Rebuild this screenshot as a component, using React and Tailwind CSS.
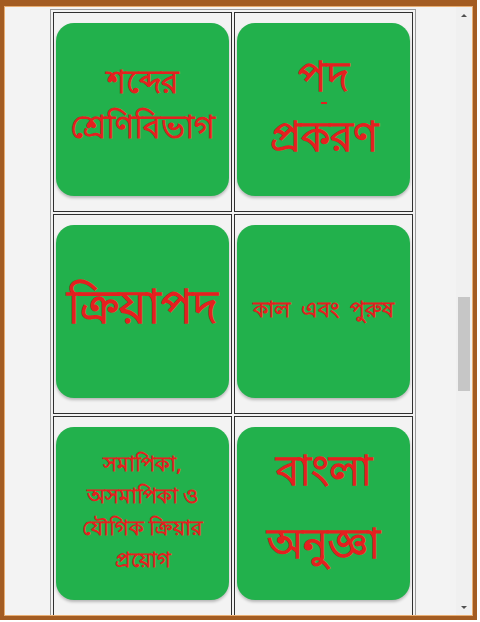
import React from "react";

// কার্ড: সবুজ বোতাম, লাল লেখা
const Card = ({ children, className = "" }) => (
  <div className="pl-[2px] pt-[10px]">
    <div
      className={`w-[173px] h-[173px] rounded-[18px] bg-[#22b14c] shadow-[0_2px_3px_rgba(0,0,0,0.25)] flex flex-col items-center justify-center text-center text-[#e4201f] font-semibold ${className}`}
    >
      {children}
    </div>
  </div>
);

const Cell = ({ children }) => (
  <div className="h-[200px] border border-[#2f2f2f] bg-[#f3f3f3]">{children}</div>
);

export default function App() {
  return (
    <div className="w-[480px] h-[622px] bg-white font-['Noto_Sans',sans-serif]">
      <div className="w-[477px] h-[620px] border-[#a35c22] border-l-[4px] border-t-[6px] border-r-[4px] border-b-[4px]">
        <div className="h-full border border-[#e7ad72] bg-[#f3f3f3] flex overflow-hidden">
          {/* বাম ফাঁকা অংশ */}
          <div className="w-[45px] shrink-0" />

          {/* টেবিল */}
          <div className="w-[366px] shrink-0 mt-[2px] border border-[#9a9a9a] p-[2px] self-start">
            <div className="grid grid-cols-2 gap-[2px]">
              <Cell>
                <Card className="text-[32px] leading-[45px] pb-[14px]">
                  <span>শব্দের</span>
                  <span>শ্রেণিবিভাগ</span>
                </Card>
              </Cell>
              <Cell>
                <Card className="text-[42px] pb-[6px]">
                  <span className="leading-[40px]">পদ</span>
                  <span className="h-[16px] flex items-center">
                    <span className="w-[6px] h-[2px] bg-[#e4201f]" />
                  </span>
                  <span className="leading-[48px]">প্রকরণ</span>
                </Card>
              </Cell>
              <Cell>
                <Card className="text-[47px] leading-[50px] pb-[14px]">
                  <span>ক্রিয়াপদ</span>
                </Card>
              </Cell>
              <Cell>
                <Card className="text-[22px] leading-[28px] pb-[8px]">
                  <span className="whitespace-pre">কাল  এবং  পুরুষ</span>
                </Card>
              </Cell>
              <Cell>
                <Card className="text-[21px] leading-[32px] pb-[6px]">
                  <span>সমাপিকা,</span>
                  <span>অসমাপিকা ও</span>
                  <span>যৌগিক ক্রিয়ার</span>
                  <span>প্রয়োগ</span>
                </Card>
              </Cell>
              <Cell>
                <Card className="text-[42px] leading-[73px] pb-[18px]">
                  <span>বাংলা</span>
                  <span>অনুজ্ঞা</span>
                </Card>
              </Cell>
            </div>
          </div>

          {/* মাঝের ফাঁকা অংশ */}
          <div className="flex-1" />

          {/* স্ক্রলবার */}
          <div className="w-[16px] shrink-0 bg-[#f0f0f0] flex flex-col items-center">
            <div className="h-[16px] flex items-center justify-center">
              <div className="w-0 h-0 border-l-[3px] border-r-[3px] border-b-[3px] border-l-transparent border-r-transparent border-b-[#505050]" />
            </div>
            <div className="h-[274px]" />
            <div className="w-[12px] h-[94px] bg-[#c6c6c6]" />
            <div className="flex-1" />
            <div className="h-[16px] flex items-center justify-center">
              <div className="w-0 h-0 border-l-[3px] border-r-[3px] border-t-[3px] border-l-transparent border-r-transparent border-t-[#505050]" />
            </div>
          </div>
        </div>
      </div>
    </div>
  );
}
